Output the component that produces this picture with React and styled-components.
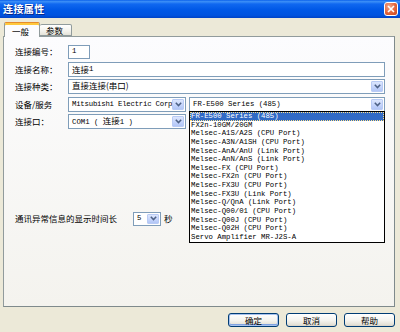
import React from "react";
import styled, { createGlobalStyle } from "styled-components";

const GlobalStyle = createGlobalStyle`
    html, body {
        margin: 0;
        padding: 0;
        width: 400px;
        height: 332px;
        overflow: hidden;
        background: #ECE9D8;
    }
`;

const Window = styled('div')`
    width: 400px;
    height: 332px;
    display: flex;
    flex-direction: column;
    background: #ECE9D8;
    font-family: "Noto Sans CJK SC", sans-serif;
    font-size: 8.5px;
    color: #000;
    overflow: hidden;
`;

const TitleBar = styled('div')`
    flex: none;
    height: 18px;
    display: flex;
    align-items: center;
    justify-content: space-between;
    padding: 0 2px 0 3px;
    background: linear-gradient(#0B61EB 0%, #3C8FF7 9%, #1068F0 22%, #0058E6 55%, #0053DF 85%, #0043C6 100%);
`;

const Title = styled('span')`
    color: #fff;
    font-weight: bold;
    font-size: 10px;
    line-height: 1;
    letter-spacing: 0.4px;
    text-shadow: 1px 1px 0 #0A2A8A;
`;

const CloseButton = styled('div')`
    width: 14px;
    height: 14px;
    box-sizing: border-box;
    border: 1px solid #fff;
    border-radius: 3px;
    background: radial-gradient(circle at 35% 30%, #F2A68A 0%, #E2643C 55%, #C6441C 100%);
    display: flex;
    align-items: center;
    justify-content: center;
`;

const Body = styled('div')`
    flex: 1;
    display: flex;
    flex-direction: column;
    padding: 4px 5px 0 3px;
`;

const TabStrip = styled('div')`
    display: flex;
    align-items: flex-end;
    height: 14px;
    padding-left: 1px;
    position: relative;
    z-index: 1;
`;

const Tab = styled('div')`
    box-sizing: border-box;
    width: ${p => (p.$active ? 36 : 32)}px;
    height: ${p => (p.$active ? 15 : 12)}px;
    margin-bottom: ${p => (p.$active ? -1 : 0)}px;
    border: 1px solid #919B9C;
    border-bottom: ${p => (p.$active ? 'none' : '1px solid #919B9C')};
    border-left: ${p => (p.$active ? '1px solid #919B9C' : 'none')};
    border-top: 1px solid ${p => (p.$active ? '#E68B2C' : '#919B9C')};
    border-radius: 2px 2px 0 0;
    box-shadow: ${p => (p.$active ? 'inset 0 2px 0 #FFC83C' : 'none')};
    background: ${p => (p.$active ? '#FCFCFE' : 'linear-gradient(#FFFFFF, #F3F2EC 60%, #E4E2D8)')};
    display: flex;
    align-items: center;
    padding-left: ${p => (p.$active ? 7 : 6)}px;
    padding-top: ${p => (p.$active ? 2 : 0)}px;
    line-height: 1;
`;

const Panel = styled('div')`
    box-sizing: border-box;
    width: 392px;
    height: 271px;
    border: 1px solid #919B9C;
    border-right-color: #7F8A8C;
    border-bottom-color: #7F8A8C;
    background: linear-gradient(#FCFCFE, #F4F3EE);
    padding: 7px 9px 0 11px;
    display: flex;
    flex-direction: column;
`;

const FormRow = styled('div')`
    display: flex;
    align-items: center;
    height: 15px;
    margin-bottom: ${p => p.$gap ?? 2}px;
    margin-top: ${p => p.$top ?? 0}px;
`;

const Label = styled('span')`
    flex: none;
    width: ${p => p.$width ?? 53}px;
    line-height: 1;
    white-space: nowrap;
`;

const TextBox = styled('div')`
    box-sizing: border-box;
    width: ${p => (p.$width ? `${p.$width}px` : 'auto')};
    flex: ${p => (p.$width ? 'none' : 1)};
    height: ${p => p.$height ?? 15}px;
    border: 1px solid #7F9DB9;
    background: #fff;
    display: flex;
    align-items: center;
    padding-left: 3px;
    font-family: "Liberation Mono", "Noto Sans CJK SC", monospace;
    font-size: 7.3px;
    line-height: 11px;
    white-space: nowrap;
`;

const Cjk = styled('span')`
    font-family: "Noto Sans CJK SC", sans-serif;
    font-size: 8.5px;
`;

const SelectWrap = styled('div')`
    position: relative;
    box-sizing: border-box;
    width: ${p => (p.$width ? `${p.$width}px` : 'auto')};
    flex: ${p => (p.$width ? 'none' : 1)};
    margin-left: ${p => p.$left ?? 0}px;
    height: ${p => p.$height ?? 15}px;
    border: 1px solid #7F9DB9;
    background: #fff;
    display: flex;
    align-items: center;
`;

const SelectText = styled('div')`
    flex: 1;
    min-width: 0;
    padding-left: 3px;
    font-family: "Liberation Mono", "Noto Sans CJK SC", monospace;
    font-size: 7.3px;
    letter-spacing: ${p => p.$tight ? '-0.2px' : '0'};
    line-height: 11px;
    white-space: nowrap;
`;

const ArrowButton = styled('div')`
    flex: none;
    align-self: stretch;
    width: 12px;
    margin: 1px;
    border-radius: 1px;
    background: linear-gradient(#DCE6FD, #C3D3FB 60%, #B2C6F6);
    border: 1px solid #B9CBF5;
    box-sizing: border-box;
    display: flex;
    align-items: center;
    justify-content: center;
`;

const DropList = styled('div')`
    position: absolute;
    top: 100%;
    left: -1px;
    right: -1px;
    box-sizing: border-box;
    border: 1px solid #000;
    background: #fff;
    z-index: 5;
    font-family: "Liberation Mono", monospace;
    font-size: 7.3px;
`;

const DropItem = styled('div')`
    height: 8.65px;
    line-height: 8.65px;
    padding-left: 1px;
    white-space: nowrap;
    box-sizing: border-box;
    color: ${p => (p.$selected ? '#fff' : '#000')};
    background: ${p => (p.$selected ? '#316AC5' : 'transparent')};
    outline: ${p => (p.$selected ? '1px dotted #FFE08A' : 'none')};
    outline-offset: -1px;
`;

const Suffix = styled('span')`
    margin-left: 3px;
    line-height: 1;
`;

const Footer = styled('div')`
    display: flex;
    justify-content: flex-end;
    gap: 7px;
    padding: 6px 0 0 0;
`;

const Button = styled('div')`
    box-sizing: border-box;
    width: 51px;
    height: 14px;
    border: 1px solid #003C74;
    border-radius: 3px;
    background: linear-gradient(#FFFFFF, #F4F3EE 55%, #E3E0D6 90%, #D6D0C5);
    box-shadow: ${p => (p.$default ? 'inset 0 0 0 1px #A7C2EE, inset 0 -1px 0 1px #7FA2E0' : 'none')};
    display: flex;
    align-items: center;
    justify-content: center;
    line-height: 1;
`;

const devices = [
    'FR-E500 Series (485)',
    'FX2n-10GM/20GM',
    'Melsec-A1S/A2S (CPU Port)',
    'Melsec-A3N/A1SH (CPU Port)',
    'Melsec-AnA/AnU (Link Port)',
    'Melsec-AnN/AnS (Link Port)',
    'Melsec-FX (CPU Port)',
    'Melsec-FX2n (CPU Port)',
    'Melsec-FX3U (CPU Port)',
    'Melsec-FX3U (Link Port)',
    'Melsec-Q/QnA (Link Port)',
    'Melsec-Q00/01 (CPU Port)',
    'Melsec-Q00J (CPU Port)',
    'Melsec-Q02H (CPU Port)',
    'Servo Amplifier MR-J2S-A',
];

const Chevron = () => (
    <svg width="7" height="5" viewBox="0 0 7 5">
        <path d="M0.8 0.8 L3.5 3.6 L6.2 0.8" fill="none" stroke="#4D6185" strokeWidth="1.5" />
    </svg>
);

const Select = ({ children, width, left, height, list, tight }) => (
    <SelectWrap $width={width} $left={left} $height={height}>
        <SelectText $tight={tight}>{children}</SelectText>
        <ArrowButton><Chevron /></ArrowButton>
        {list}
    </SelectWrap>
);

export default function App() {
    return (
        <>
            <GlobalStyle />
            <Window>
                <TitleBar>
                    <Title>连接属性</Title>
                    <CloseButton>
                        <svg width="8" height="8" viewBox="0 0 8 8">
                            <path d="M1 1 L7 7 M7 1 L1 7" stroke="#fff" strokeWidth="1.6" />
                        </svg>
                    </CloseButton>
                </TitleBar>
                <Body>
                    <TabStrip>
                        <Tab $active>一般</Tab>
                        <Tab>参数</Tab>
                    </TabStrip>
                    <Panel>
                        <FormRow $gap={3}>
                            <Label>连接编号：</Label>
                            <TextBox $width={22} $height={14}>1</TextBox>
                        </FormRow>
                        <FormRow>
                            <Label>连接名称：</Label>
                            <TextBox><Cjk>连接</Cjk>1</TextBox>
                        </FormRow>
                        <FormRow $gap={3}>
                            <Label>连接种类：</Label>
                            <Select><Cjk>直接连接(串口)</Cjk></Select>
                        </FormRow>
                        <FormRow>
                            <Label>设备/服务</Label>
                            <Select width={118} tight>Mitsubishi Electric Corp</Select>
                            <Select
                                left={3}
                                list={
                                    <DropList>
                                        {devices.map((d, i) => (
                                            <DropItem key={d} $selected={i === 0}>{d}</DropItem>
                                        ))}
                                    </DropList>
                                }
                            >
                                FR-E500 Series (485)
                            </Select>
                        </FormRow>
                        <FormRow>
                            <Label>连接口：</Label>
                            <Select width={118}>COM1 ( <Cjk>连接</Cjk>1 )</Select>
                        </FormRow>
                        <FormRow $top={80}>
                            <Label $width={118}>通讯异常信息的显示时间长</Label>
                            <Select width={28} height={14}>5</Select>
                            <Suffix>秒</Suffix>
                        </FormRow>
                    </Panel>
                    <Footer>
                        <Button $default>确定</Button>
                        <Button>取消</Button>
                        <Button>帮助</Button>
                    </Footer>
                </Body>
            </Window>
        </>
    );
}
